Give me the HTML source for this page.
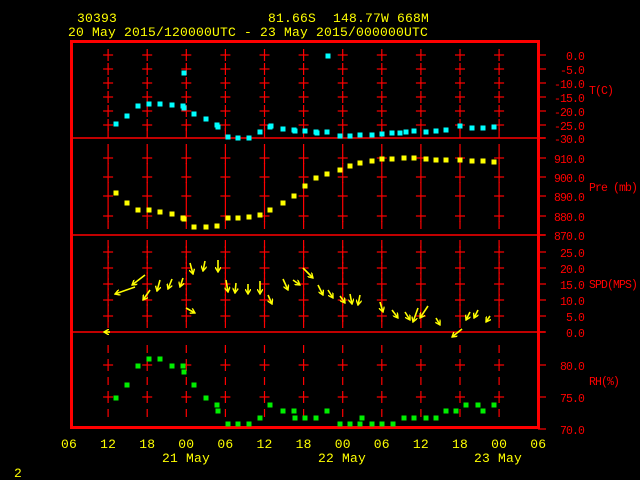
<!DOCTYPE html>
<html><head><style>
html,body{margin:0;padding:0;background:#000;width:640px;height:480px;overflow:hidden}
svg{display:block}
text{font-family:"Liberation Mono",monospace;font-size:13px;letter-spacing:0.2px}
.y{fill:#ffff00}.r{fill:#ff0000}
.s text{font-size:11.5px;letter-spacing:-0.9px}
</style></head><body>
<svg width="640" height="480" viewBox="0 0 640 480" xmlns="http://www.w3.org/2000/svg">
<defs><marker id="ah" markerWidth="6" markerHeight="6" refX="5" refY="3" orient="auto" markerUnits="userSpaceOnUse"><path d="M0,0 L5,3 L0,6" fill="none" stroke="#ff0" stroke-width="1.4"/></marker></defs>
<text class="y" x="77" y="22">30393</text>
<text class="y" x="268" y="22">81.66S</text>
<text class="y" x="333" y="22">148.77W</text>
<text class="y" x="397" y="22">668M</text>
<text class="y" x="68" y="36">20 May 2015/120000UTC - 23 May 2015/000000UTC</text>
<g id="grid" stroke="#ff0000" stroke-width="1.2"></g>
<g stroke="#ff0000" stroke-width="1.5">
<line x1="70" y1="138" x2="545" y2="138"/>
<line x1="70" y1="235" x2="545" y2="235"/>
<line x1="70" y1="332" x2="545" y2="332"/>
</g>
<rect x="71.5" y="41.5" width="467" height="386" fill="none" stroke="#ff0000" stroke-width="3"/>
<g id="rt" stroke="#ff0000" stroke-width="1.2"></g>
<g class="r s" text-anchor="end">
<text x="584" y="60">0.0</text><text x="584" y="74">-5.0</text><text x="584" y="88">-10.0</text><text x="584" y="102">-15.0</text><text x="584" y="116">-20.0</text><text x="584" y="130">-25.0</text><text x="584" y="143">-30.0</text>
<text x="584" y="163">910.0</text><text x="584" y="182">900.0</text><text x="584" y="201">890.0</text><text x="584" y="221">880.0</text><text x="584" y="240">870.0</text>
<text x="584" y="257">25.0</text><text x="584" y="273">20.0</text><text x="584" y="289">15.0</text><text x="584" y="305">10.0</text><text x="584" y="321">5.0</text><text x="584" y="337">0.0</text>
<text x="584" y="370">80.0</text><text x="584" y="402">75.0</text><text x="584" y="434">70.0</text>
</g>
<g class="r s">
<text x="589" y="94">T(C)</text><text x="589" y="191">Pre (mb)</text><text x="589" y="288">SPD(MPS)</text><text x="589" y="385">RH(%)</text>
</g>
<g id="tl" class="y" text-anchor="middle"></g>
<g class="y" text-anchor="middle">
<text x="186" y="462">21 May</text><text x="342" y="462">22 May</text><text x="498" y="462">23 May</text>
</g>
<text class="y" x="14" y="477">2</text>
<g id="pts"></g>
<g id="wind" stroke="#ffff00" stroke-width="1.6" fill="none"></g>
</svg>
<script>
var NS="http://www.w3.org/2000/svg";
function el(p,n,a){var e=document.createElementNS(NS,n);for(var k in a)e.setAttribute(k,a[k]);p.appendChild(e);return e}
var g=document.getElementById('grid'),rt=document.getElementById('rt'),tl=document.getElementById('tl');
var xs=[],labs=["06","12","18","00","06","12","18","00","06","12","18","00","06"];
for(var i=0;i<13;i++){xs.push(69+i*39.1);}
var ticks=[55,69,83,97,111,125,158,177,196,216,252,268,284,300,316,365,397];
var mids=[148,167,186,206,225,244,260,276,292,308,324,349,381,413];
for(var i=1;i<12;i++){var x=xs[i];
 ticks.forEach(function(y){el(g,'line',{x1:x,y1:y-6,x2:x,y2:y+6});el(g,'line',{x1:x-5,y1:y,x2:x+5,y2:y});});
 mids.forEach(function(y){el(g,'line',{x1:x,y1:y-4,x2:x,y2:y+4});});
 el(g,'line',{x1:x,y1:128,x2:x,y2:138});
}
for(var i=0;i<13;i++){var t=el(tl,'text',{x:xs[i],y:448});t.textContent=labs[i];}
[55,69,83,97,111,125,138,158,177,196,216,235,252,268,284,300,316,332,365,397,429].forEach(function(y){el(rt,'line',{x1:538,y1:y,x2:546,y2:y});});
var pg=document.getElementById('pts');
function P(arr,c,s){arr.forEach(function(p){el(pg,'rect',{x:p[0]-s/2,y:p[1]-s/2,width:s,height:s,fill:c});});}
P([[116,124],[127,116],[138,106],[149,104],[160,104],[172,105],[183,106],[184,108],[184,73],[194,114],[206,119],[217,125],[218,127],[228,137],[238,138],[249,138],[260,132],[270,127],[271,126],[283,129],[294,130],[295,131],[305,131],[316,132],[317,133],[328,56],[327,132],[340,136],[350,136],[360,135],[372,135],[382,134],[392,133],[400,133],[406,132],[414,131],[426,132],[436,131],[446,130],[460,126],[472,128],[483,128],[494,127]],'#00ffff',5);
P([[116,193],[127,203],[138,210],[149,210],[160,212],[172,214],[183,218],[184,219],[194,227],[206,227],[217,226],[228,218],[238,218],[249,217],[260,215],[270,210],[283,203],[294,196],[305,186],[316,178],[327,174],[340,170],[350,166],[360,163],[372,161],[382,159],[392,159],[404,158],[414,158],[426,159],[436,160],[446,160],[460,160],[472,161],[483,161],[494,162]],'#ffff00',5);
P([[116,398],[127,385],[138,366],[149,359],[160,359],[172,366],[183,366],[184,372],[194,385],[206,398],[217,405],[218,411],[228,424],[238,424],[249,424],[260,418],[270,405],[283,411],[294,411],[295,418],[305,418],[316,418],[327,411],[340,424],[350,424],[360,424],[362,418],[372,424],[382,424],[393,424],[404,418],[414,418],[426,418],[436,418],[446,411],[456,411],[466,405],[478,405],[483,411],[494,405]],'#00ee00',5);
var w=document.getElementById('wind');
[[135,287,115,294],[145,275,132,285],[150,290,143,300],[160,280,157,291],[172,279,168,289],[183,278,180,287],[190,263,193,274],[205,261,203,271],[218,260,218,272],[226,280,228,292],[236,283,235,293],[248,284,248,294],[260,281,260,294],[268,295,272,304],[283,279,288,290],[293,280,300,285],[303,268,313,278],[318,285,323,295],[328,290,333,298],[340,296,345,303],[350,294,352,304],[360,295,358,305],[380,302,383,312],[392,310,398,318],[405,312,410,320],[418,308,413,322],[428,306,420,318],[436,318,440,325],[462,329,452,337],[470,312,466,320],[478,310,474,318],[490,316,486,322],[186,308,195,313],[110,332,104,332]].forEach(function(a){el(w,'line',{x1:a[0],y1:a[1],x2:a[2],y2:a[3],'marker-end':'url(#ah)'});});
</script>
</body></html>
